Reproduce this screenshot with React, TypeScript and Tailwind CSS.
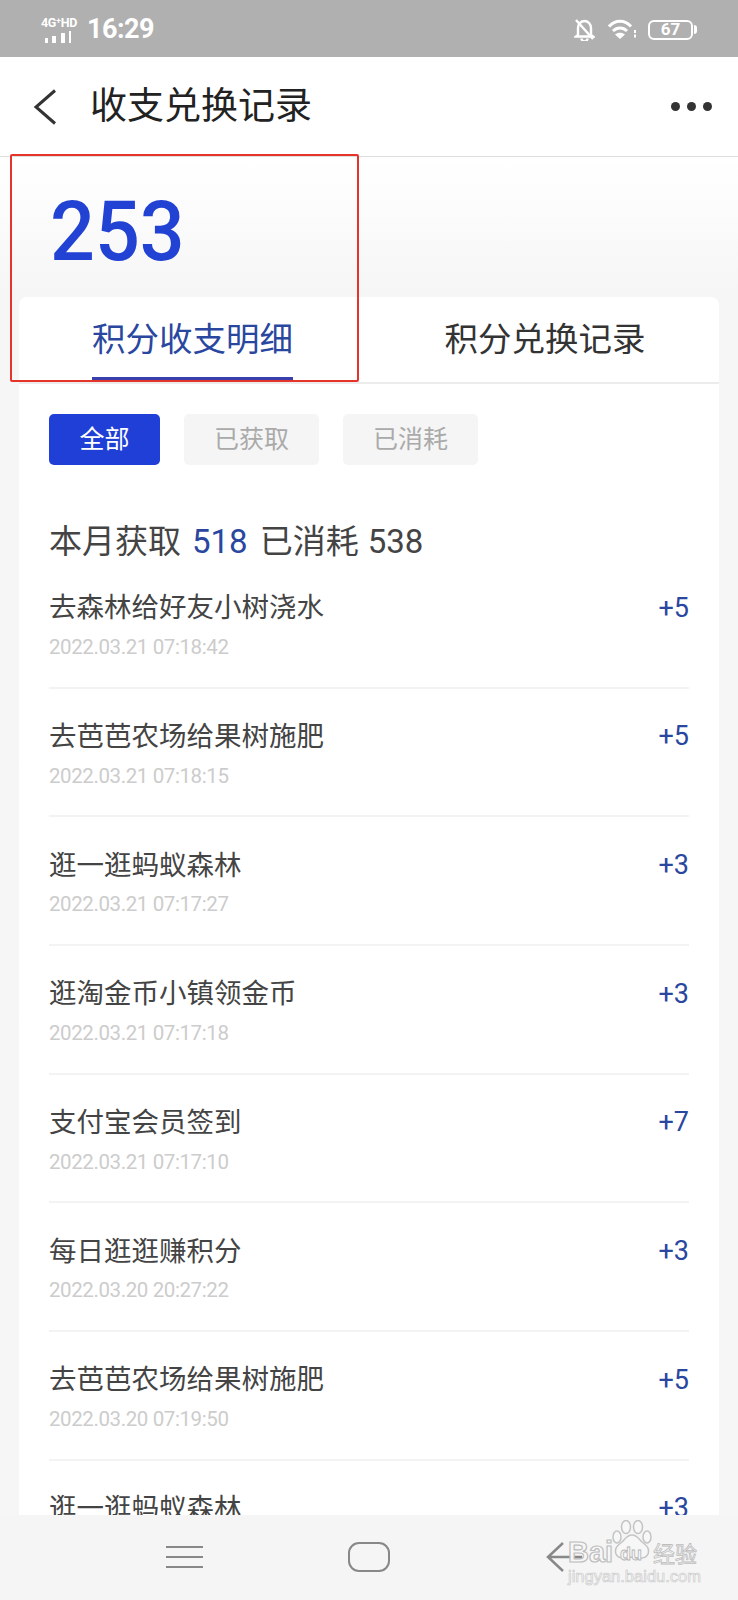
const rows = [
  ["去森林给好友小树浇水", "2022.03.21 07:18:42", "+5"],
  ["去芭芭农场给果树施肥", "2022.03.21 07:18:15", "+5"],
  ["逛一逛蚂蚁森林", "2022.03.21 07:17:27", "+3"],
  ["逛淘金币小镇领金币", "2022.03.21 07:17:18", "+3"],
  ["支付宝会员签到", "2022.03.21 07:17:10", "+7"],
  ["每日逛逛赚积分", "2022.03.20 20:27:22", "+3"],
  ["去芭芭农场给果树施肥", "2022.03.20 07:19:50", "+5"],
  ["逛一逛蚂蚁森林", "", "+3"],
];

function StatusBar() {
  return (
    <div className="h-[57px] shrink-0 bg-[#b0b0b0] flex items-center justify-between pl-[41px] pr-[41px] pt-[2px] text-white">
      <div className="flex items-center gap-[8px]">
        <div className="w-[38px] flex flex-col items-start">
          <span className="text-[12.500px] leading-[12px] font-bold tracking-[-0.300px] whitespace-nowrap">4G⁺HD</span>
          <svg width="30" height="12" viewBox="0 0 30 12" fill="white" className="mt-[2px]">
            <rect x="4" y="7" width="3" height="5" />
            <rect x="11" y="5" width="4" height="7" />
            <rect x="20" y="2" width="4" height="10" />
            <rect x="28" y="0" width="2" height="12" />
          </svg>
        </div>
        <span className="text-[27px] font-bold leading-none tracking-[-0.500px]">16:29</span>
      </div>
      <div className="flex items-center gap-[10px]">
        <svg width="21" height="22" viewBox="0 0 21 22" fill="none" stroke="white" strokeWidth="2.400" className="mr-[3px]">
          <path d="M4 16V9c0-4 3-7 6.500-7S17 5 17 9v7l2 1.500H2z" />
          <path d="M7.500 19.500a3 3 0 0 0 6 0" />
          <path d="M2 1l17 19" />
        </svg>
        <svg width="30" height="21" viewBox="0 0 30 21" fill="none" stroke="white" strokeWidth="3">
          <path d="M1 7.500c6-7 16-7 22 0" />
          <path d="M5 12c4-4 10-4 14 0" />
          <path d="M12 20l-5-4.500c3-2.500 7-2.500 10 0z" fill="white" stroke="none" />
          <path d="M27 11v9" strokeWidth="2" strokeDasharray="3 1.500" />
        </svg>
        <div className="flex items-center">
          <div className="w-[45px] h-[20px] border-2 border-white rounded-[6px] flex items-center justify-center text-[17px] font-bold leading-none">67</div>
          <div className="w-[3px] h-[9px] ml-[1px] bg-white rounded-r-sm" />
        </div>
      </div>
    </div>
  );
}

function Header() {
  return (
    <div className="h-[100px] shrink-0 bg-white border-b border-[#dedede] flex items-center justify-between pl-[33px] pr-[26px]">
      <div className="flex items-center">
        <svg width="24" height="36" viewBox="0 0 24 36" fill="none" stroke="#333333" strokeWidth="3">
          <path d="M22 1.500 3 18l19 16.500" />
        </svg>
        <span className="ml-[33px] text-[37px] leading-none text-[#222222]">收支兑换记录</span>
      </div>
      <div className="flex gap-[7px]">
        <span className="w-[9px] h-[9px] rounded-full bg-[#333333]" />
        <span className="w-[9px] h-[9px] rounded-full bg-[#333333]" />
        <span className="w-[9px] h-[9px] rounded-full bg-[#333333]" />
      </div>
    </div>
  );
}

function Row({ title, date, points }: { title: string; date: string; points: string }) {
  return (
    <div className="h-[128.700px] shrink-0 border-b-2 border-[#f3f3f3] pt-[28px]">
      <div className="flex items-center justify-between h-[40px]">
        <span className="text-[27.500px] leading-none text-[#444444]">{title}</span>
        <span className="text-[27px] leading-none text-[#2a479f]">{points}</span>
      </div>
      <div className="mt-[7px] text-[20.500px] leading-[24px] text-[#cccccc] tracking-[-0.400px]">{date}</div>
    </div>
  );
}

function BottomNav() {
  return (
    <div className="h-[85px] shrink-0 bg-[#f5f5f5] flex items-center justify-between pl-[166px] pr-[18px] pb-[1px] relative">
      <div className="flex flex-col gap-[8px]">
        <span className="w-[37px] h-[2px] bg-[#888888]" />
        <span className="w-[37px] h-[2px] bg-[#888888]" />
        <span className="w-[37px] h-[2px] bg-[#888888]" />
      </div>
      <div className="ml-[145px] w-[42px] h-[30px] rounded-[11px] border-[2.500px] border-[#888888]" />
      <div className="ml-[156px] flex-1 flex items-center">
        <svg width="36" height="32" viewBox="0 0 36 32" fill="none" stroke="#888888" strokeWidth="2.500">
          <path d="M17 2 2 16l15 14M2 16h34" />
        </svg>
      </div>
      <div className="absolute left-[568px] top-[5px] w-[132px] h-[66px] font-['Liberation_Sans',sans-serif]">
        <svg width="42" height="41" viewBox="0 0 42 41" fill="#f7f7f7" stroke="#c4c4c4" strokeWidth="1.500" className="absolute left-[43px] top-0">
          <ellipse cx="6" cy="17" rx="4" ry="6" />
          <ellipse cx="15" cy="7" rx="4.500" ry="6.500" />
          <ellipse cx="27" cy="7" rx="4.500" ry="6.500" />
          <ellipse cx="36" cy="17" rx="4" ry="6" />
          <path d="M21 15c5 0 7 4 10 7 4 3 8 6 6 12-2 5-8 5-16 3-8 2-14 2-16-3-2-6 2-9 6-12 3-3 5-7 10-7z" />
        </svg>
        <span className="absolute left-[52px] top-[25px] text-[18px] leading-none font-bold text-[#f7f7f7] [-webkit-text-stroke:0.800px_#b5b5b5]">du</span>
        <span className="absolute left-0 top-[18px] text-[29px] leading-none font-bold text-[#f7f7f7] [-webkit-text-stroke:1.200px_#bdbdbd]">Bai</span>
        <span className="absolute left-[85px] top-[21px] text-[22px] leading-none font-['Noto_Sans_CJK_SC',sans-serif] text-[#f7f7f7] [-webkit-text-stroke:0.800px_#bdbdbd] whitespace-nowrap">经验</span>
        <span className="absolute left-0 top-[48px] text-[16.500px] leading-none text-[#f7f7f7] [-webkit-text-stroke:0.600px_#c8c8c8] whitespace-nowrap">jingyan.baidu.com</span>
      </div>
    </div>
  );
}

export default function App() {
  return (
    <div className="relative w-[738px] h-[1600px] overflow-hidden flex flex-col bg-[#f6f6f6] font-['Roboto','Noto_Sans_CJK_SC',sans-serif]">
      <StatusBar />
      <Header />
      <div className="flex-1 min-h-0 flex flex-col bg-gradient-to-b from-white to-[#f6f6f6] to-[10%] overflow-hidden">
        <div className="h-[140px] shrink-0 pl-[50px] pt-[33px]">
          <span className="block origin-left scale-x-[0.94] text-[84px] leading-[84px] text-[#2142d2] font-medium">253</span>
        </div>
        <div className="flex-1 min-h-0 mx-[19px] rounded-t-[8px] bg-white overflow-hidden">
          <div className="h-[87px] flex border-b-2 border-[#ececec]">
            <div className="w-[347px] flex justify-center">
              <div className="w-[201px] h-[83px] border-b-[3px] border-[#3a3fae] flex justify-center pt-[26px] text-[33.500px] leading-none text-[#2a479f] whitespace-nowrap">积分收支明细</div>
            </div>
            <div className="flex-1 flex justify-center pt-[26px] pl-[5px] text-[33.500px] leading-none text-[#333333] whitespace-nowrap">积分兑换记录</div>
          </div>
          <div className="pl-[30px] pr-[30px]">
            <div className="mt-[30px] flex gap-[24px]">
              <div className="w-[111px] h-[51px] rounded-[5px] bg-[#1f3fd6] text-white text-[25px] flex items-center justify-center">全部</div>
              <div className="w-[135px] h-[51px] rounded-[5px] bg-[#f5f5f5] text-[#aaaaaa] text-[25px] flex items-center justify-center">已获取</div>
              <div className="w-[135px] h-[51px] rounded-[5px] bg-[#f5f5f5] text-[#aaaaaa] text-[25px] flex items-center justify-center">已消耗</div>
            </div>
            <div className="mt-[58px] h-[36px] flex items-center text-[33px] leading-none text-[#444444] whitespace-nowrap">
              <span>本月获取</span>
              <span className="ml-[11px] text-[#2a479f]">518</span>
              <span className="ml-[12px]">已消耗</span>
              <span className="ml-[9px]">538</span>
            </div>
            <div className="mt-[1px] flex flex-col">
              {rows.map((r, i) => (
                <Row key={i} title={r[0]} date={r[1]} points={r[2]} />
              ))}
            </div>
          </div>
        </div>
      </div>
      <BottomNav />
      <div className="absolute left-[10px] top-[154px] w-[349px] h-[228px] border-2 border-[#e5352b] rounded-[2px] pointer-events-none" />
    </div>
  );
}
